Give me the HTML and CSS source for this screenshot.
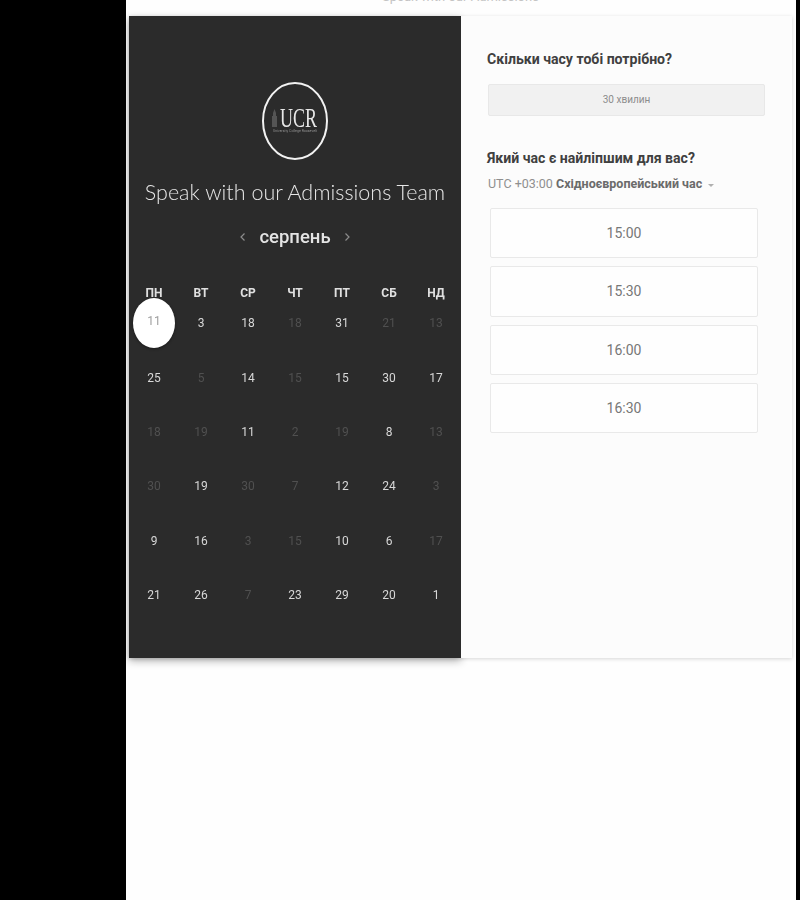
FILE: index.html
```html
<!DOCTYPE html>
<html lang="uk">
<head>
<meta charset="utf-8">
<title>Speak with our Admissions Team</title>
<link rel="stylesheet" href="styles.css">
</head>
<body>
<div class="page">
  <div class="top-title">Speak with our Admissions</div>
  <div class="card">
    <section class="left">
      <div class="logo">
        <svg width="68" height="80" viewBox="0 0 68 80" aria-hidden="true">
          <ellipse cx="34" cy="40" rx="32" ry="38" fill="none" stroke="#f2f2f2" stroke-width="2"/>
          <path d="M11 46V35h1v-3l1.5-4 1.5 4v3h1v11z" fill="#555"/>
          <text x="19" y="46" class="logo-mark" textLength="37" lengthAdjust="spacingAndGlyphs">UCR</text>
          <text x="12" y="51" class="logo-sub" textLength="44" lengthAdjust="spacingAndGlyphs">University College Roosevelt</text>
        </svg>
      </div>
      <h1 class="team">Speak with our Admissions Team</h1>
      <div class="month">
        <svg class="chev" width="7" height="10" viewBox="0 0 7 10" aria-hidden="true"><path d="M5.5 1.5 2 5l3.5 3.5" fill="none" stroke="#8c8c8c" stroke-width="1.2"/></svg>
        <span class="month-name">серпень</span>
        <svg class="chev" width="7" height="10" viewBox="0 0 7 10" aria-hidden="true"><path d="M1.5 1.5 5 5 1.5 8.5" fill="none" stroke="#8c8c8c" stroke-width="1.2"/></svg>
      </div>
      <div class="weekdays">
        <span>ПН</span><span>ВТ</span><span>СР</span><span>ЧТ</span><span>ПТ</span><span>СБ</span><span>НД</span>
      </div>
      <div class="days">
        <span class="day sel">11</span><span class="day on">3</span><span class="day on">18</span><span class="day">18</span><span class="day on">31</span><span class="day">21</span><span class="day">13</span>
        <span class="day on">25</span><span class="day">5</span><span class="day on">14</span><span class="day">15</span><span class="day on">15</span><span class="day on">30</span><span class="day on">17</span>
        <span class="day">18</span><span class="day">19</span><span class="day on">11</span><span class="day">2</span><span class="day">19</span><span class="day on">8</span><span class="day">13</span>
        <span class="day">30</span><span class="day on">19</span><span class="day">30</span><span class="day">7</span><span class="day on">12</span><span class="day on">24</span><span class="day">3</span>
        <span class="day on">9</span><span class="day on">16</span><span class="day">3</span><span class="day">15</span><span class="day on">10</span><span class="day on">6</span><span class="day">17</span>
        <span class="day on">21</span><span class="day on">26</span><span class="day">7</span><span class="day on">23</span><span class="day on">29</span><span class="day on">20</span><span class="day on">1</span>
      </div>
    </section>
    <section class="right">
      <h2 class="q">Скільки часу тобі потрібно?</h2>
      <div class="duration">30 хвилин</div>
      <h2 class="q q2">Який час є найліпшим для вас?</h2>
      <div class="tz">UTC +03:00 <b>Східноєвропейський час</b><span class="caret"></span></div>
      <div class="slots">
        <div class="slot">15:00</div>
        <div class="slot">15:30</div>
        <div class="slot">16:00</div>
        <div class="slot">16:30</div>
      </div>
    </section>
  </div>
</div>
</body>
</html>
```

FILE: styles.css
```css
html, body {
  margin: 0;
  padding: 0;
  height: 100%;
  background: #000;
}
body {
  font-family: Roboto, "Liberation Sans", sans-serif;
  overflow: hidden;
}
.page {
  box-sizing: border-box;
  width: 670px;
  height: 900px;
  margin-left: 126px;
  padding: 0 4px 0 3px;
  background: #fefefe;
  overflow: hidden;
}
.top-title {
  box-sizing: border-box;
  height: 16px;
  margin-top: -10px;
  margin-bottom: 10px;
  text-align: center;
  font-size: 13px;
  line-height: 13px;
  color: #c4c4c4;
  white-space: nowrap;
}
.card {
  display: flex;
  width: 663px;
  height: 642px;
  background: #fcfcfc;
  box-shadow: 0 1px 4px rgba(0, 0, 0, .16);
  filter: blur(.35px);
}
.left {
  width: 332px;
  flex: none;
  background: #2b2b2b;
  box-shadow: 0 3px 8px rgba(0, 0, 0, .3);
  color: #fff;
  padding-top: 65px;
  box-sizing: border-box;
  display: flex;
  flex-direction: column;
  align-items: center;
}
.logo {
  height: 80px;
  line-height: 0;
}
.logo-mark {
  font-family: "Liberation Serif", serif;
  font-size: 27px;
  fill: #e8e8e8;
}
.logo-sub {
  font-family: Roboto, sans-serif;
  font-size: 2.6px;
  fill: #8f8f8f;
}
.team {
  margin: 16px 0 0;
  font-family: Lato, sans-serif;
  font-weight: 300;
  font-size: 21.5px;
  line-height: 30px;
  color: #e6e6e6;
  white-space: nowrap;
}
.month {
  display: flex;
  align-items: center;
  justify-content: center;
  gap: 13px;
  margin-top: 15px;
  height: 30px;
}
.chev {
  flex: none;
}
.month-name {
  font-family: Roboto, sans-serif;
  font-weight: 500;
  font-size: 18.5px;
  line-height: 30px;
  color: #e4e4e4;
}
.weekdays,
.days {
  display: grid;
  grid-template-columns: repeat(7, 47px);
  width: 329px;
  justify-items: center;
}
.weekdays {
  margin-top: 32px;
  height: 18px;
  line-height: 18px;
  font-size: 12px;
  font-weight: 700;
  color: #e0e0e0;
}
.weekdays span {
  position: relative;
  z-index: 2;
}
.days {
  grid-auto-rows: 54.4px;
  align-items: center;
  margin-top: -6px;
}
.day {
  width: 47px;
  text-align: center;
  font-size: 12px;
  line-height: 16px;
  color: #505050;
}
.day.on {
  color: #d8d8d8;
}
.day.sel {
  box-sizing: border-box;
  width: 42px;
  height: 50px;
  line-height: 46px;
  margin-top: -1px;
  border-radius: 50%;
  background: #fff;
  color: #9f9f9f;
  box-shadow: 0 1px 3px rgba(0, 0, 0, .4);
}
.right {
  flex: 1;
  min-width: 0;
  position: relative;
  box-sizing: border-box;
  padding: 33px 27px 0 26px;
  background: #fcfcfc;
}
.q {
  margin: 0;
  font-size: 14.1px;
  line-height: 20px;
  font-weight: 700;
  color: #404040;
  white-space: nowrap;
}
.duration {
  box-sizing: border-box;
  margin: 15px 0 0 1px;
  height: 32px;
  line-height: 30px;
  text-align: center;
  font-size: 10px;
  color: #8c8c8c;
  background: #f1f1f1;
  border: 1px solid #e8e8e8;
  border-radius: 2px;
}
.q2 {
  margin-top: 32px;
}
.tz {
  margin-top: 7px;
  font-size: 12.5px;
  line-height: 18px;
  color: #8f8f8f;
  white-space: nowrap;
  padding-left: 1px;
}
.tz b {
  color: #6b6b6b;
  font-weight: 700;
}
.caret {
  display: inline-block;
  margin-left: 6px;
  vertical-align: 1px;
  border: 3px solid transparent;
  border-top: 3.5px solid #b0b0b0;
  border-bottom: 0;
}
.slots {
  display: flex;
  flex-direction: column;
  gap: 8px;
  margin: 15px 7px 0 3px;
}
.slot {
  box-sizing: border-box;
  height: 50.3px;
  line-height: 49px;
  text-align: center;
  font-size: 14px;
  color: #777;
  background: #fefefe;
  border: 1px solid #e9e9e9;
  border-radius: 2px;
}
```
